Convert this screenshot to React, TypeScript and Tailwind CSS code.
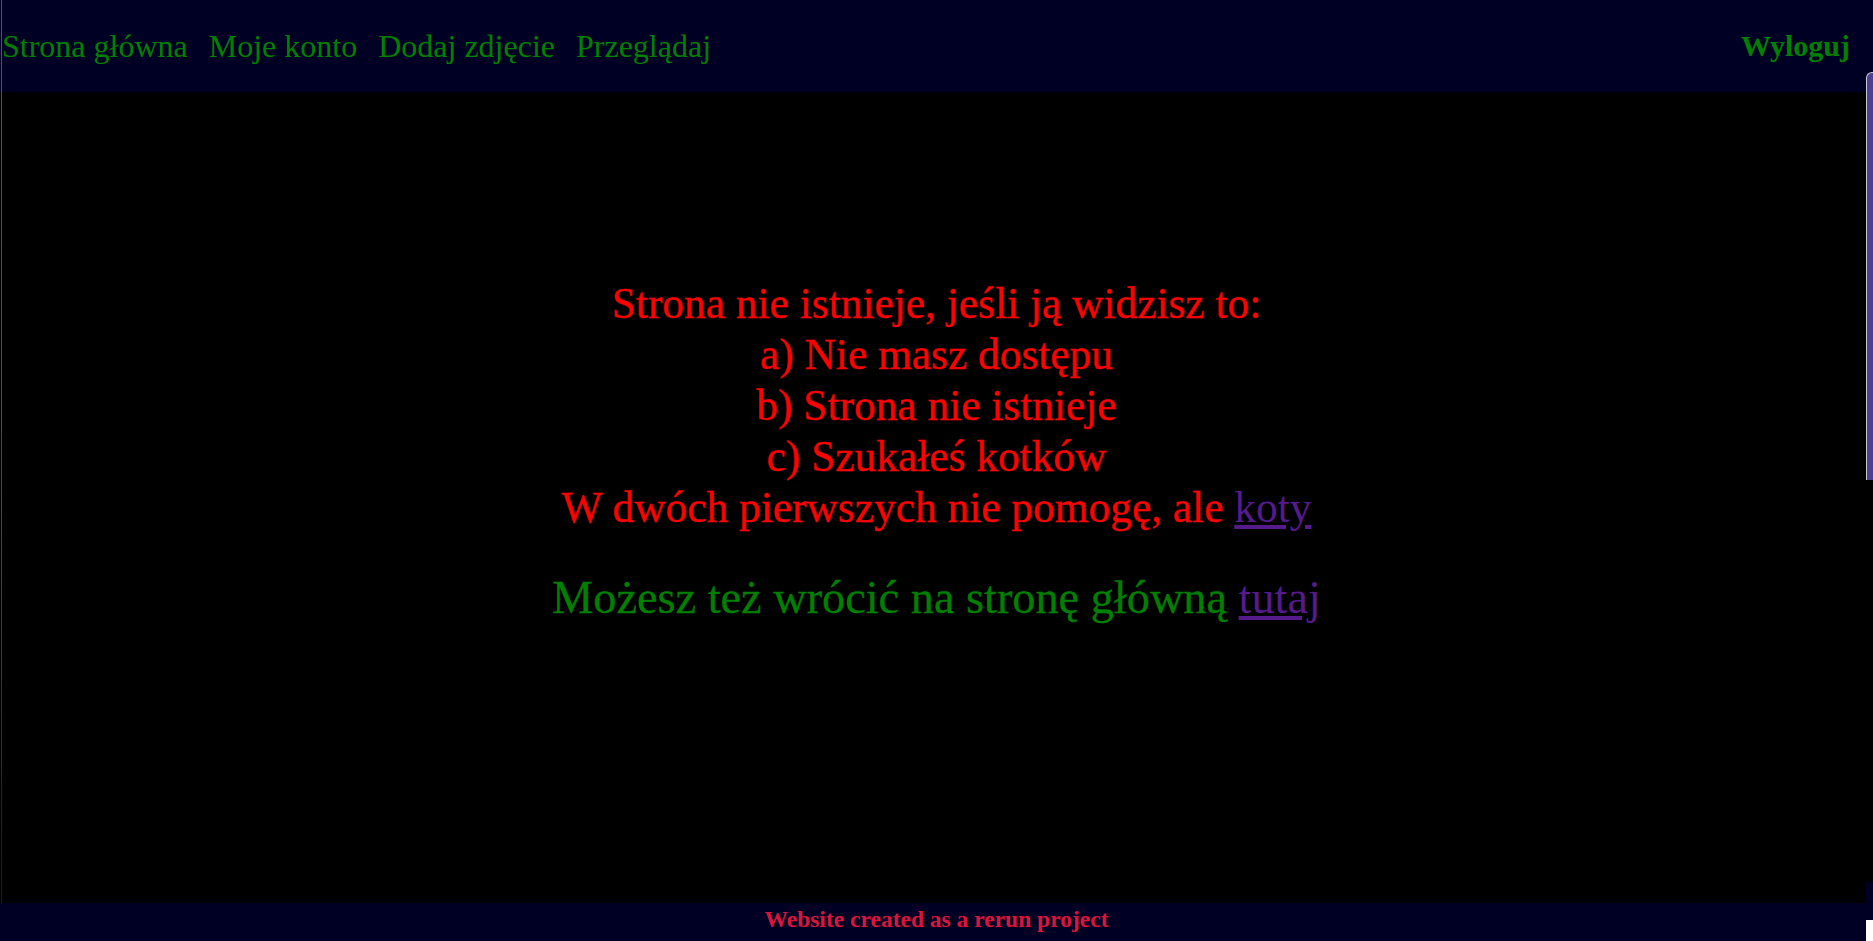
import React from "react";

const serif = { fontFamily: '"Liberation Serif", "Times New Roman", serif' };

export default function App() {
  return (
    <div className="relative flex h-[941px] w-full flex-col overflow-hidden bg-black" style={serif}>
      <nav className="flex h-[92px] shrink-0 items-center justify-between bg-[#000024] pl-[2px] pr-[23px]">
        <div className="flex items-center gap-[21px] text-[32px] leading-[40px] text-[#008000]">
          <a href="#">Strona główna</a>
          <a href="#">Moje konto</a>
          <a href="#">Dodaj zdjęcie</a>
          <a href="#">Przeglądaj</a>
        </div>
        <a href="#" className="text-[30px] font-bold leading-[40px] text-[#008000]">
          Wyloguj
        </a>
      </nav>

      <main className="flex flex-1 flex-col items-center pt-[186px] text-center">
        <div className="text-[43.4px] leading-[51px] text-[#ff0000] [-webkit-text-stroke:0.3px_#ff0000]">
          <div>Strona nie istnieje, jeśli ją widzisz to:</div>
          <div>a) Nie masz dostępu</div>
          <div>b) Strona nie istnieje</div>
          <div>c) Szukałeś kotków</div>
          <div>
            W dwóch pierwszych nie pomogę, ale{" "}
            <a href="#" className="text-[#551a8b] underline [-webkit-text-stroke:0px]">
              koty
            </a>
          </div>
        </div>
        <div className="mt-[39px] text-[46.3px] leading-[52px] text-[#008000] [-webkit-text-stroke:0.3px_#008000]">
          Możesz też wrócić na stronę główną{" "}
          <a href="#" className="text-[#551a8b] underline [-webkit-text-stroke:0px]">
            tutaj
          </a>
        </div>
      </main>

      <footer className="h-[38px] shrink-0 bg-[#000024] text-center">
        <div className="text-[23.5px] font-bold leading-[32px] text-[#dc143c]">
          Website created as a rerun project
        </div>
      </footer>

      {/* left red edge line */}
      <div className="pointer-events-none absolute left-[1px] top-0 h-[903px] w-[1px] bg-gradient-to-b from-[#dc143c] via-[#c41236] to-[#3a0c1c]" />

      {/* scrollbar-like thumb at right edge */}
      <div className="pointer-events-none absolute right-0 top-[72px] h-[408px] w-[7px] rounded-tl-[6px] border-l border-t border-[#c8c8d0] bg-[#4d3f96]" />
      <div className="pointer-events-none absolute right-0 top-[882px] h-[38px] w-[7px] bg-[#000024]" />
      <div className="pointer-events-none absolute right-0 top-[920px] h-[21px] w-[7px] bg-white" />
    </div>
  );
}
